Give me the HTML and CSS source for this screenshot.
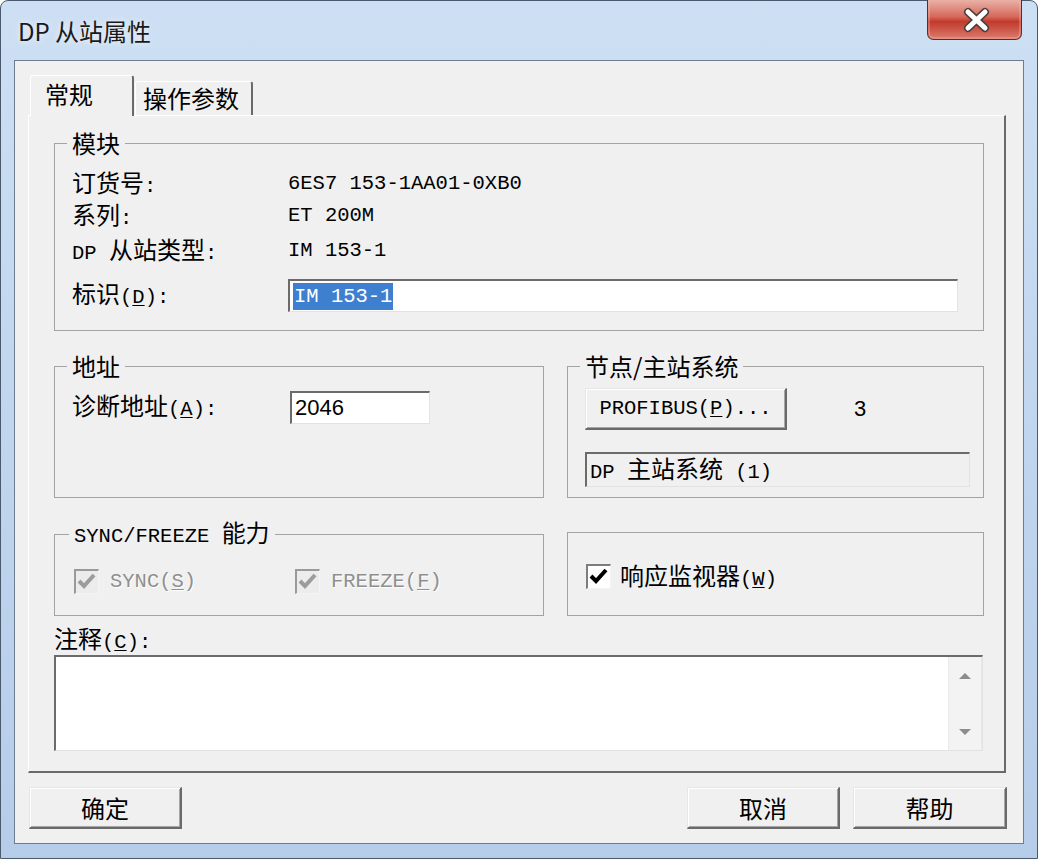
FILE: index.html
```html
<!DOCTYPE html>
<html lang="zh-CN">
<head>
<meta charset="utf-8">
<title>DP 从站属性</title>
<link rel="stylesheet" href="styles.css">
</head>
<body>
<div class="window">
  <div class="titlebar">
    <span class="title">DP 从站属性</span>
    <div class="close">
      <svg width="95" height="40" viewBox="0 0 95 40">
        <defs>
          <linearGradient id="cg" x1="0" y1="0" x2="0" y2="1">
            <stop offset="0" stop-color="#eab1a6"/>
            <stop offset="0.42" stop-color="#d6695c"/>
            <stop offset="0.55" stop-color="#c13a2c"/>
            <stop offset="1" stop-color="#dc7d70"/>
          </linearGradient>
        </defs>
        <path d="M0.5 0 V33 Q0.5 39.5 7 39.5 H88 Q94.5 39.5 94.5 33 V0" fill="url(#cg)" stroke="#5e2b26"/>
        <path d="M2 1 V32 Q2 38 8 38 H87 Q93 38 93 32 V1" fill="none" stroke="#f3c2b8" stroke-opacity="0.6"/>
        <path d="M41 12 L58 28 M58 12 L41 28" stroke="#4d3f3e" stroke-width="8" stroke-linecap="round"/>
        <path d="M41 12 L58 28 M58 12 L41 28" stroke="#ffffff" stroke-width="5" stroke-linecap="round"/>
      </svg>
    </div>
  </div>
  <div class="client">
    <div class="tabs">
      <div class="tab active">常规</div>
      <div class="tab">操作参数</div>
    </div>
    <div class="panel">
      <fieldset class="group module">
        <legend>模块</legend>
        <div class="row"><span class="lbl">订货号<span class="m">:</span></span><span class="m">6ES7 153-1AA01-0XB0</span></div>
        <div class="row"><span class="lbl">系列<span class="m">:</span></span><span class="m">ET 200M</span></div>
        <div class="row r3"><span class="lbl"><span class="m">DP </span>从站类型<span class="m">:</span></span><span class="m">IM 153-1</span></div>
        <div class="row r4"><span class="lbl">标识<span class="m">(<u>D</u>):</span></span><div class="field name-field"><span class="sel m">IM 153-1</span></div></div>
      </fieldset>

      <div class="pair">
        <fieldset class="group addr">
          <legend>地址</legend>
          <div class="row addr-row"><span class="lbl addr-lbl">诊断地址<span class="m">(<u>A</u>):</span></span><div class="field addr-field"><span class="sans">2046</span></div></div>
        </fieldset>
        <fieldset class="group node">
          <legend>节点/主站系统</legend>
          <div class="node-top">
            <div class="btn pb"><span class="m">PROFIBUS(<u>P</u>)...</span></div>
            <span class="sans num">3</span>
          </div>
          <div class="field ro"><span><span class="m">DP </span>主站系统<span class="m"> (1)</span></span></div>
        </fieldset>
      </div>

      <div class="pair pair2">
        <fieldset class="group sync">
          <legend><span class="m">SYNC/FREEZE </span>能力</legend>
          <div class="chk-row">
            <div class="chk-item first">
              <span class="cb dis"><svg width="22" height="22" viewBox="0 0 22 22"><polyline points="3,10 8,15 18,4" fill="none" stroke="#9c9c9c" stroke-width="4"/></svg></span>
              <span class="m dis-text">SYNC(<u>S</u>)</span>
            </div>
            <div class="chk-item">
              <span class="cb dis"><svg width="22" height="22" viewBox="0 0 22 22"><polyline points="3,10 8,15 18,4" fill="none" stroke="#9c9c9c" stroke-width="4"/></svg></span>
              <span class="m dis-text">FREEZE(<u>F</u>)</span>
            </div>
          </div>
        </fieldset>
        <div class="group resp">
          <div class="chk-item">
            <span class="cb"><svg width="22" height="22" viewBox="0 0 22 22"><polyline points="3,10 8,15 18,4" fill="none" stroke="#000" stroke-width="4"/></svg></span>
            <span>响应监视器<span class="m">(<u>W</u>)</span></span>
          </div>
        </div>
      </div>

      <div class="comment-label">注释<span class="m">(<u>C</u>):</span></div>
      <div class="memo">
        <div class="memo-text"></div>
        <div class="vscroll">
          <svg width="32" height="93" viewBox="0 0 32 93">
            <polygon points="10,22 22,22 16,16" fill="#8c8c8c"/>
            <polygon points="10,72 22,72 16,78" fill="#8c8c8c"/>
          </svg>
        </div>
      </div>
    </div>
    <div class="buttons">
      <div class="btn dlg ok">确定</div>
      <div class="btn dlg cancel">取消</div>
      <div class="btn dlg help">帮助</div>
    </div>
  </div>
</div>
</body>
</html>
```
FILE: styles.css
```css
* { box-sizing: border-box; }
html, body { margin: 0; padding: 0; }
body {
  width: 1038px;
  height: 859px;
  overflow: hidden;
  background: #ffffff;
  font-family: "Noto Sans CJK SC", sans-serif;
  font-size: 24px;
  color: #000;
}
.m {
  font-family: "Liberation Mono", "Noto Sans CJK SC", monospace;
  font-size: 20.5px;
}
.sans {
  font-family: "Liberation Sans", sans-serif;
  font-size: 22px;
}
u { text-decoration-thickness: 1px; text-underline-offset: 2px; }

.window {
  width: 1038px;
  height: 859px;
  border: 1px solid #4a5a6c;
  border-radius: 8px 8px 0 0;
  background: linear-gradient(180deg, #cddff3 0%, #c0d6ee 50%, #b6cde9 100%);
  display: flex;
  flex-direction: column;
}
.titlebar {
  height: 59px;
  flex: none;
  display: flex;
  align-items: flex-start;
  justify-content: space-between;
  padding-left: 17px;
}
.title {
  margin-top: 14px;
  font-size: 24px;
  line-height: 32px;
  color: #1a1a1a;
  text-shadow: 0 0 6px rgba(255,255,255,0.9);
}
.close {
  margin-top: -1px;
  margin-right: 15px;
  width: 95px;
  height: 40px;
}
.close svg { display: block; }

.client {
  flex: 1;
  margin: 0 13px 14px 13px;
  border: 1px solid #6e7d8e;
  background: #f0f0f0;
  padding: 14px 17px 14px 13px;
  display: flex;
  flex-direction: column;
}

.tabs {
  height: 40px;
  flex: none;
  display: flex;
  align-items: flex-end;
  padding-left: 2px;
  position: relative;
  z-index: 1;
}
.tab {
  height: 34px;
  line-height: 32px;
  padding: 0 12px 0 7px;
  margin-left: 1px;
  background: #f0f0f0;
  border-top: 1px solid #ffffff;
  border-left: 1px solid #ffffff;
  border-right: 2px solid #6a6a6a;
  border-radius: 3px 3px 0 0;
}
.tab.active {
  height: 41px;
  width: 104px;
  margin-left: 0;
  margin-bottom: -1px;
  line-height: 36px;
  padding-left: 14px;
}

.panel {
  flex: 1;
  border-top: 1px solid #ffffff;
  border-left: 1px solid #ffffff;
  border-right: 2px solid #6a6a6a;
  border-bottom: 2px solid #6a6a6a;
  padding: 15px 20px 0 25px;
  display: flex;
  flex-direction: column;
}

.group {
  margin: 0;
  min-width: 0;
  border: 1px solid #a3a3a3;
}
legend {
  padding: 0 5px;
  margin-left: -5px;
  line-height: 24px;
  font-size: 24px;
}

.module {
  height: 200px;
  padding: 13px 24px 0 17px;
}
.row {
  display: flex;
  align-items: center;
  height: 32px;
  line-height: 32px;
}
.row.r3 { margin-top: 3px; }
.row.r4 { margin-top: 12px; height: 33px; }
.lbl { width: 216px; flex: none; }

.field {
  background: #ffffff;
  border-top: 2px solid #6b6b6b;
  border-left: 2px solid #6b6b6b;
  border-right: 1px solid #e2e2e2;
  border-bottom: 1px solid #e2e2e2;
  display: flex;
  align-items: center;
}
.name-field {
  width: 670px;
  height: 33px;
  padding-left: 3px;
}
.sel {
  background: #3f7fd0;
  color: #ffffff;
  line-height: 27px;
  padding: 0 1px;
}

.pair {
  display: grid;
  grid-template-columns: 490px 1fr;
  column-gap: 23px;
  align-items: start;
  margin-top: 23px;
}
.addr {
  height: 144px;
  padding: 13px 0 0 17px;
}
.addr-row { height: 33px; }
.addr-lbl { width: 218px; }
.addr-field {
  width: 140px;
  height: 33px;
  padding-left: 3px;
}
.node {
  height: 144px;
  padding: 10px 0 0 17px;
}
.node-top {
  display: flex;
  align-items: center;
}
.btn {
  background: #f0f0f0;
  border-top: 1px solid #e6e6e6;
  border-left: 1px solid #e6e6e6;
  border-right: 2px solid #6a6a6a;
  border-bottom: 2px solid #6a6a6a;
  box-shadow: inset 1px 1px 0 #ffffff, inset -1px -1px 0 #a6a6a6;
  display: flex;
  align-items: center;
  justify-content: center;
}
.pb {
  width: 202px;
  height: 42px;
}
.num { margin-left: 67px; }
.ro {
  margin-top: 22px;
  width: 385px;
  height: 35px;
  background: #f0f0f0;
  padding-left: 3px;
  line-height: 32px;
}

.pair2 { margin-top: 22px; }
.sync {
  height: 96px;
  padding: 20px 0 0 19px;
}
.chk-row { display: flex; }
.chk-item {
  display: flex;
  align-items: center;
  gap: 11px;
  height: 25px;
  line-height: 25px;
}
.chk-item.first { width: 221px; }
.cb {
  width: 25px;
  height: 25px;
  flex: none;
  background: #ffffff;
  border-top: 2px solid #7d7d7d;
  border-left: 2px solid #7d7d7d;
  border-right: 1px solid #f4f4f4;
  border-bottom: 1px solid #f4f4f4;
}
.cb svg { display: block; }
.cb.dis { background: #ececec; border-color: #9a9a9a #f4f4f4 #f4f4f4 #9a9a9a; }
.dis-text { color: #8f8f8f; text-shadow: 1px 1px 0 #ffffff; }
.resp {
  margin-top: 12px;
  height: 84px;
  padding: 31px 0 0 18px;
}
.resp .chk-item { gap: 9px; }

.comment-label {
  margin-top: 10px;
  line-height: 24px;
  height: 24px;
}
.memo {
  margin-top: 5px;
  width: 929px;
  height: 96px;
  background: #ffffff;
  border-top: 2px solid #6b6b6b;
  border-left: 2px solid #6b6b6b;
  border-right: 1px solid #e2e2e2;
  border-bottom: 1px solid #e2e2e2;
  display: flex;
}
.memo-text { flex: 1; }
.vscroll {
  width: 34px;
  background: #f3f3f3;
  border-left: 1px solid #e9e9e9;
  border-right: 1px solid #e9e9e9;
}
.vscroll svg { display: block; }

.buttons {
  flex: none;
  margin-top: 14px;
  margin-right: -1px;
  display: flex;
  gap: 13px;
}
.dlg {
  width: 153px;
  height: 42px;
  font-size: 24px;
}
.ok { margin-left: 1px; }
.cancel { margin-left: auto; }
.help { width: 154px; }
```
